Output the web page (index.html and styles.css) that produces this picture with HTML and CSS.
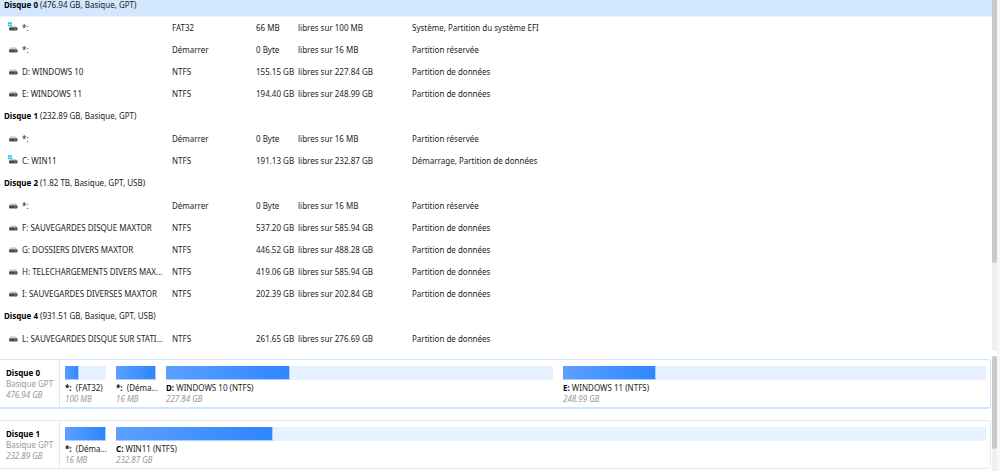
FILE: index.html
```html
<!DOCTYPE html>
<html lang="fr">
<head>
<meta charset="utf-8">
<title>Gestion des disques</title>
<link rel="stylesheet" href="styles.css">
</head>
<body>
<svg class="defs" aria-hidden="true">
  <defs>
    <linearGradient id="lid" x1="0" y1="0" x2="0" y2="1"><stop offset="0" stop-color="#ececec"/><stop offset="1" stop-color="#a8a8ab"/></linearGradient>
    <symbol id="drive" viewBox="0 0 12 12">
      <path d="M3.4 4h5.6L10.4 7H2z" fill="url(#lid)"/>
      <rect x="2" y="6.6" width="8.6" height="2.8" rx=".8" fill="#4a4a4c"/>
      <rect x="7.6" y="7.6" width="1.8" height="1" fill="#4fae4f"/>
    </symbol>
    <symbol id="system" viewBox="0 0 12 12">
      <path d="M4 4.6h4.8L10.4 7H2z" fill="url(#lid)"/>
      <rect x="2" y="6.6" width="8.6" height="2.8" rx=".8" fill="#4a4a4c"/>
      <rect x="7.6" y="7.6" width="1.8" height="1" fill="#4fae4f"/>
      <path d="M1 1.2h1.8V3H1zM3.2 1.2H5V3H3.2zM1 3.4h1.8v1.8H1zM3.2 3.4H5v1.8H3.2z" fill="#22b8f2"/>
    </symbol>
  </defs>
</svg>
<main class="app">
  <section class="pane list-pane">
    <table class="volumes">
      <colgroup><col class="c-name"><col class="c-fs"><col class="c-free"><col class="c-total"><col></colgroup>
      <tbody>
        <tr class="group first"><th colspan="5"><b>Disque 0</b> (476.94 GB, Basique, GPT)</th></tr>
        <tr><td><svg class="icon"><use href="#system"/></svg>*:</td><td>FAT32</td><td>66 MB</td><td>libres sur 100 MB</td><td>Système, Partition du système EFI</td></tr>
        <tr><td><svg class="icon"><use href="#drive"/></svg>*:</td><td>Démarrer</td><td>0 Byte</td><td>libres sur 16 MB</td><td>Partition réservée</td></tr>
        <tr><td><svg class="icon"><use href="#drive"/></svg>D: WINDOWS 10</td><td>NTFS</td><td>155.15 GB</td><td>libres sur 227.84 GB</td><td>Partition de données</td></tr>
        <tr><td><svg class="icon"><use href="#drive"/></svg>E: WINDOWS 11</td><td>NTFS</td><td>194.40 GB</td><td>libres sur 248.99 GB</td><td>Partition de données</td></tr>
        <tr class="group"><th colspan="5"><b>Disque 1</b> (232.89 GB, Basique, GPT)</th></tr>
        <tr><td><svg class="icon"><use href="#drive"/></svg>*:</td><td>Démarrer</td><td>0 Byte</td><td>libres sur 16 MB</td><td>Partition réservée</td></tr>
        <tr><td><svg class="icon"><use href="#system"/></svg>C: WIN11</td><td>NTFS</td><td>191.13 GB</td><td>libres sur 232.87 GB</td><td>Démarrage, Partition de données</td></tr>
        <tr class="group"><th colspan="5"><b>Disque 2</b> (1.82 TB, Basique, GPT, USB)</th></tr>
        <tr><td><svg class="icon"><use href="#drive"/></svg>*:</td><td>Démarrer</td><td>0 Byte</td><td>libres sur 16 MB</td><td>Partition réservée</td></tr>
        <tr><td><svg class="icon"><use href="#drive"/></svg>F: SAUVEGARDES DISQUE MAXTOR</td><td>NTFS</td><td>537.20 GB</td><td>libres sur 585.94 GB</td><td>Partition de données</td></tr>
        <tr><td><svg class="icon"><use href="#drive"/></svg>G: DOSSIERS DIVERS MAXTOR</td><td>NTFS</td><td>446.52 GB</td><td>libres sur 488.28 GB</td><td>Partition de données</td></tr>
        <tr><td><svg class="icon"><use href="#drive"/></svg>H: TELECHARGEMENTS DIVERS MAX...</td><td>NTFS</td><td>419.06 GB</td><td>libres sur 585.94 GB</td><td>Partition de données</td></tr>
        <tr><td><svg class="icon"><use href="#drive"/></svg>I: SAUVEGARDES DIVERSES MAXTOR</td><td>NTFS</td><td>202.39 GB</td><td>libres sur 202.84 GB</td><td>Partition de données</td></tr>
        <tr class="group"><th colspan="5"><b>Disque 4</b> (931.51 GB, Basique, GPT, USB)</th></tr>
        <tr><td><svg class="icon"><use href="#drive"/></svg>L: SAUVEGARDES DISQUE SUR STATI...</td><td>NTFS</td><td>261.65 GB</td><td>libres sur 276.69 GB</td><td>Partition de données</td></tr>
      </tbody>
    </table>
    <div class="scrollbar"><div class="thumb" style="height:75%"></div></div>
  </section>
  <section class="pane map-pane">
    <div class="cards">
      <article class="card selected">
        <header class="disk"><h2>Disque 0</h2><p>Basique GPT</p><p class="size">476.94 GB</p></header>
        <div class="parts four">
          <div class="part"><div class="bar"><div class="fill" style="width:35%"></div></div><p><b>*:</b>&nbsp; (FAT32)</p><p class="size">100 MB</p></div>
          <div class="part"><div class="bar"><div class="fill" style="width:100%"></div></div><p><b>*:</b>&nbsp; (Déma...</p><p class="size">16 MB</p></div>
          <div class="part"><div class="bar"><div class="fill" style="width:32%"></div></div><p><b>D:</b> WINDOWS 10 (NTFS)</p><p class="size">227.84 GB</p></div>
          <div class="part"><div class="bar"><div class="fill" style="width:22%"></div></div><p><b>E:</b> WINDOWS 11 (NTFS)</p><p class="size">248.99 GB</p></div>
        </div>
      </article>
      <article class="card">
        <header class="disk"><h2>Disque 1</h2><p>Basique GPT</p><p class="size">232.89 GB</p></header>
        <div class="parts two">
          <div class="part"><div class="bar"><div class="fill" style="width:100%"></div></div><p><b>*:</b>&nbsp; (Déma...</p><p class="size">16 MB</p></div>
          <div class="part"><div class="bar"><div class="fill" style="width:18%"></div></div><p><b>C:</b> WIN11 (NTFS)</p><p class="size">232.87 GB</p></div>
        </div>
      </article>
    </div>
    <div class="scrollbar"><div class="thumb" style="height:81%"></div></div>
  </section>
</main>
</body>
</html>
```
FILE: styles.css
```css
* { box-sizing: border-box; }
body {
  margin: 0;
  font-family: "Noto Sans", "Open Sans", sans-serif;
  font-size: 8px;
  line-height: 11px;
  color: #1c1c1c;
  background: #fff;
}
h2, p { margin: 0; font-size: 8px; white-space: nowrap; }
b, h2 { font-weight: 700; color: #000; }
.defs { position: absolute; width: 0; height: 0; }
.app {
  display: flex;
  flex-direction: column;
  height: 100vh;
  overflow: hidden;
  border-right: 3px solid #f7f7f7;
}
.pane { display: flex; }
.list-pane { flex: none; }
.map-pane { flex: 1; margin-top: 5px; }
.scrollbar { flex: none; width: 5px; background: #f0f0f0; }
.thumb { background: #cacaca; border-radius: 0 0 2px 2px; }
.map-pane .thumb { border-radius: 2px; }

.volumes {
  flex: 1;
  table-layout: fixed;
  border-collapse: collapse;
  width: 100%;
  margin-bottom: 2px;
}
.volumes td, .volumes th {
  height: 22px;
  padding: 0;
  text-align: left;
  vertical-align: middle;
  font-weight: 400;
  white-space: nowrap;
}
.volumes th { height: 23px; padding-left: 4px; }
.volumes .first th {
  height: 16px;
  padding-bottom: 6px;
  line-height: 9px;
  background: #d3e7ff;
  border-bottom: 1px solid #e6f2ff;
}
.volumes td:first-child { padding-left: 7px; }
.c-name { width: 172px; }
.c-fs { width: 84px; }
.c-free { width: 42px; }
.c-total { width: 114px; }
.icon { width: 12px; height: 12px; margin-right: 3px; vertical-align: text-bottom; }

.cards {
  flex: 1;
  min-width: 0;
  display: flex;
  flex-direction: column;
  gap: 11px;
  padding: 3px 1px 0 0;
}
.card {
  display: flex;
  border: 1px solid #e2ebf6;
  border-left: 0;
  border-radius: 0 3px 3px 0;
}
.card.selected { border-color: #d3e5fd; border-bottom-width: 2px; }
.disk { flex: none; width: 60px; padding: 7px 0 7px 6px; border-right: 1px solid #dfe6f0; color: #999; }
.parts { flex: 1; display: grid; gap: 10px; padding: 6px 4px 3px 5px; }
.four { grid-template-columns: 41px 40px 387fr 423fr; }
.two { grid-template-columns: 41px 1fr; }
.part { min-width: 0; }
.bar { height: 14px; margin-bottom: 2px; background: #e6f2ff; }
.fill {
  height: 14px;
  background: linear-gradient(90deg, #5c9fff, #2f86ff);
  border: solid #a9cfff;
  border-width: 0 1px 1px 0;
}
.size { color: #999; font-style: italic; }
```
